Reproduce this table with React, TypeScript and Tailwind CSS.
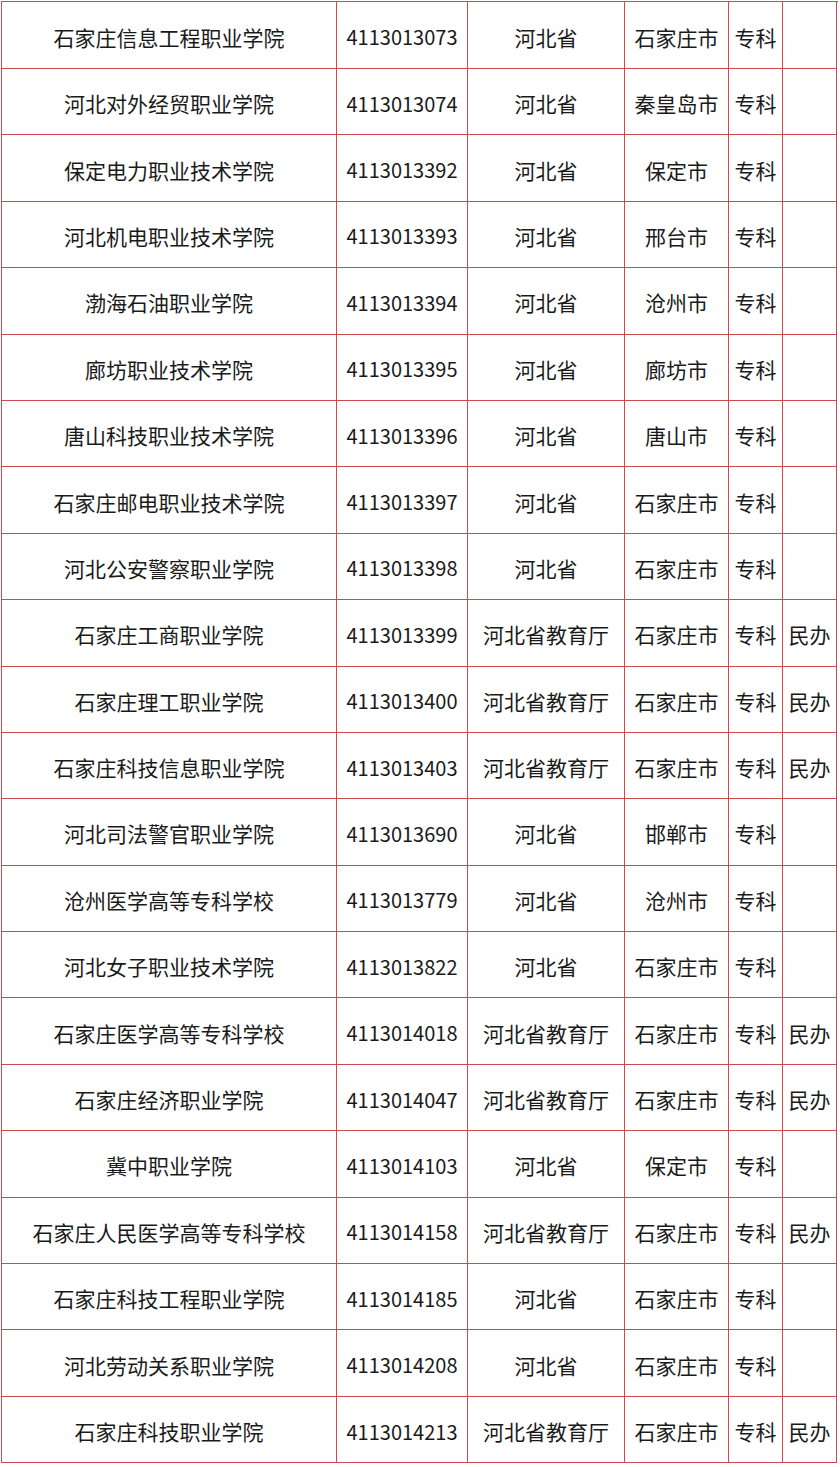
import React from "react";

const rows: [string, string, string, string, string, string][] = [
  ["石家庄信息工程职业学院", "4113013073", "河北省", "石家庄市", "专科", ""],
  ["河北对外经贸职业学院", "4113013074", "河北省", "秦皇岛市", "专科", ""],
  ["保定电力职业技术学院", "4113013392", "河北省", "保定市", "专科", ""],
  ["河北机电职业技术学院", "4113013393", "河北省", "邢台市", "专科", ""],
  ["渤海石油职业学院", "4113013394", "河北省", "沧州市", "专科", ""],
  ["廊坊职业技术学院", "4113013395", "河北省", "廊坊市", "专科", ""],
  ["唐山科技职业技术学院", "4113013396", "河北省", "唐山市", "专科", ""],
  ["石家庄邮电职业技术学院", "4113013397", "河北省", "石家庄市", "专科", ""],
  ["河北公安警察职业学院", "4113013398", "河北省", "石家庄市", "专科", ""],
  ["石家庄工商职业学院", "4113013399", "河北省教育厅", "石家庄市", "专科", "民办"],
  ["石家庄理工职业学院", "4113013400", "河北省教育厅", "石家庄市", "专科", "民办"],
  ["石家庄科技信息职业学院", "4113013403", "河北省教育厅", "石家庄市", "专科", "民办"],
  ["河北司法警官职业学院", "4113013690", "河北省", "邯郸市", "专科", ""],
  ["沧州医学高等专科学校", "4113013779", "河北省", "沧州市", "专科", ""],
  ["河北女子职业技术学院", "4113013822", "河北省", "石家庄市", "专科", ""],
  ["石家庄医学高等专科学校", "4113014018", "河北省教育厅", "石家庄市", "专科", "民办"],
  ["石家庄经济职业学院", "4113014047", "河北省教育厅", "石家庄市", "专科", "民办"],
  ["冀中职业学院", "4113014103", "河北省", "保定市", "专科", ""],
  ["石家庄人民医学高等专科学校", "4113014158", "河北省教育厅", "石家庄市", "专科", "民办"],
  ["石家庄科技工程职业学院", "4113014185", "河北省", "石家庄市", "专科", ""],
  ["河北劳动关系职业学院", "4113014208", "河北省", "石家庄市", "专科", ""],
  ["石家庄科技职业学院", "4113014213", "河北省教育厅", "石家庄市", "专科", "民办"],
];

export default function App() {
  return (
    <div
      className="w-[840px] h-[1467px] bg-white pl-[1px] pt-[1px] overflow-hidden"
      style={{ fontFamily: '"Noto Sans CJK SC", "Noto Sans", sans-serif' }}
    >
      <div className="w-[837px] border-l border-t border-[#cf4a50]">
        {rows.map((r, i) => (
          <div
            key={i}
            className={`grid grid-cols-[335px_131px_157px_104px_54px_54px] ${
              i === 0 ? "h-[67px]" : "h-[66.4px]"
            }`}
          >
            {r.map((c, j) => (
              <div
                key={j}
                className={`flex items-center justify-center border-r border-b border-[#cf4a50] pt-[4px] leading-none text-[#1a1a1a] whitespace-nowrap ${
                  j === 1 ? "text-[20px]" : "text-[21px]"
                }`}
              >
                {c}
              </div>
            ))}
          </div>
        ))}
      </div>
    </div>
  );
}
